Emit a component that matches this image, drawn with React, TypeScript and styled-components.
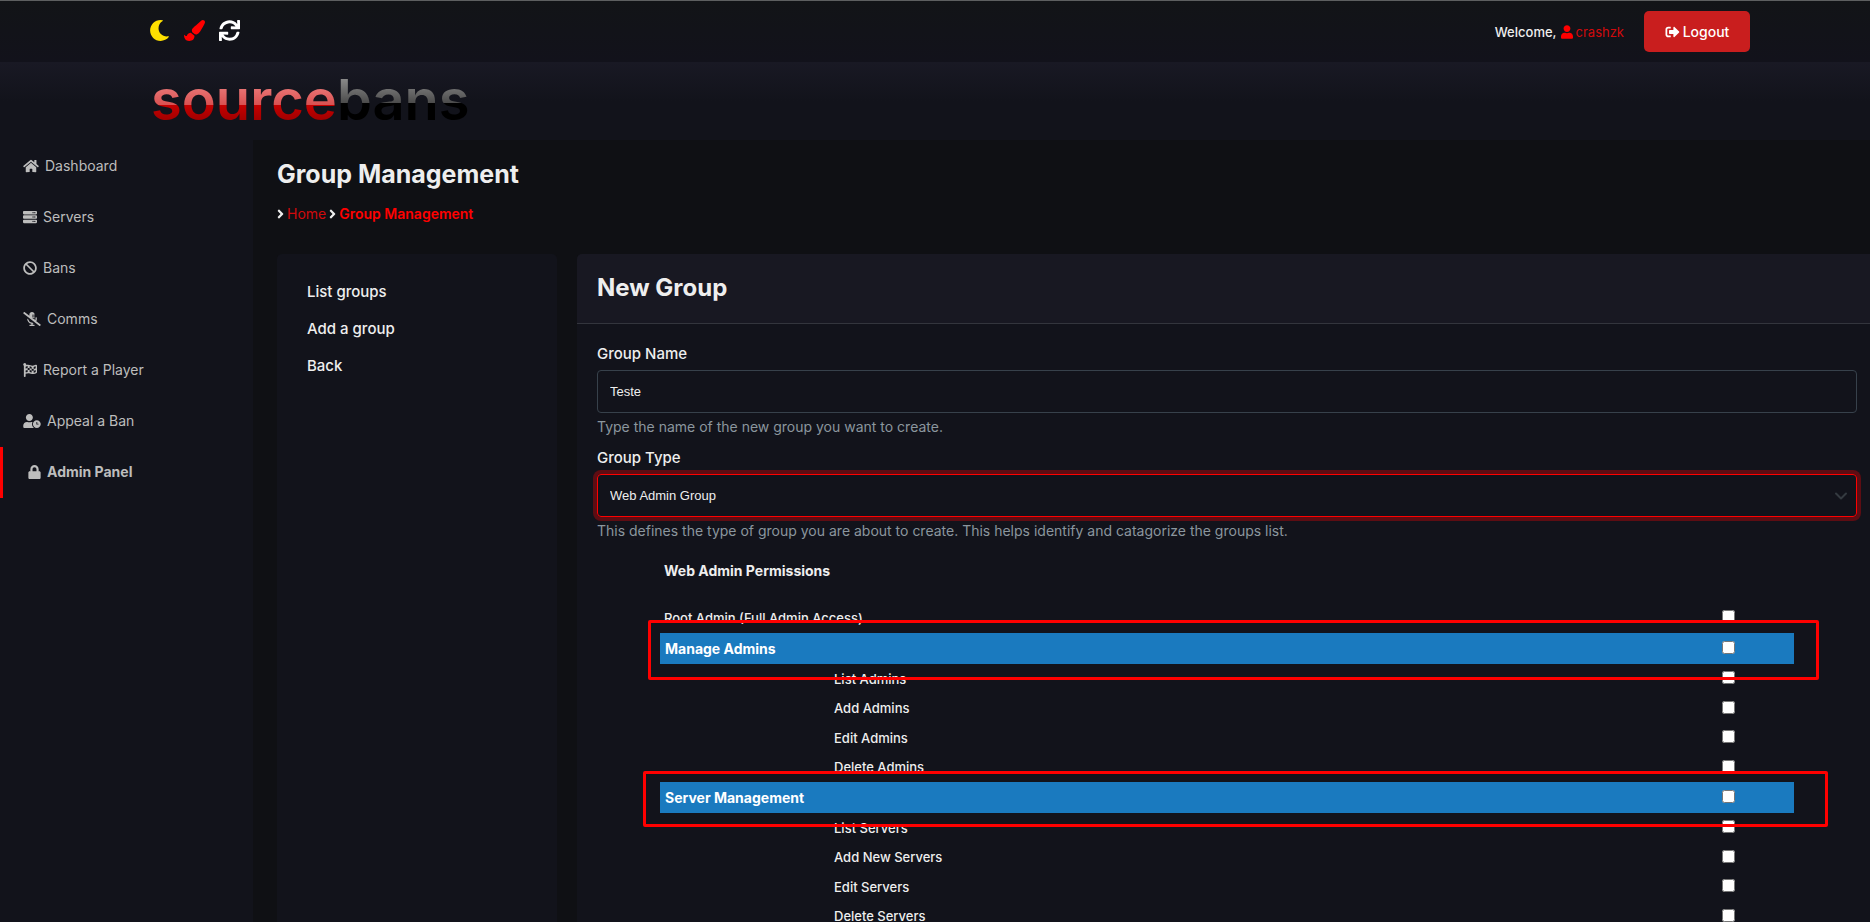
import React, { useState } from "react";
import styled, { createGlobalStyle } from "styled-components";
import {
  FaMoon, FaPaintBrush, FaSync, FaUser, FaSignOutAlt, FaHome, FaServer, FaBan,
  FaMicrophoneAltSlash, FaFlagCheckered, FaUserClock, FaLock, FaAngleRight,
} from "react-icons/fa";

const GlobalStyle = createGlobalStyle`
  *, *::before, *::after { box-sizing: border-box; }
  body {
    margin: 0;
    background: #0f1014;
    color: #eee;
    font: 500 13px/20px Inter, "Liberation Sans", sans-serif;
  }
  a { color: inherit; text-decoration: none; }
  svg { display: block; flex: none; }
`;

const Shell = styled.div`
  display: flex;
  flex-direction: column;
  height: 100vh;
  overflow: hidden;
`;

/* Glyphs share one height while each keeps its own width. */
const Glyph = styled.span<{ $width: number }>`
  flex: none;
  width: ${(p) => p.$width}px;
  svg { width: 100%; height: 14px; }
`;

const TopBar = styled.div`
  display: flex;
  align-items: center;
  justify-content: space-between;
  flex: none;
  height: 62px;
  padding: 0 120px 0 149px;
  border-top: 1px solid #5d5f60;
  background: linear-gradient(#121417, #12121b);
`;

const Tools = styled.div`
  display: flex;
  gap: 14px;
`;

const ToolButton = styled.button<{ $color: string }>`
  display: flex;
  padding: 0 0 2px;
  border: 0;
  background: none;
  color: ${(p) => p.$color};
  font-size: 21px;
  cursor: pointer;
`;

const Account = styled.div`
  display: flex;
  align-items: center;
  gap: 20px;
`;

const Welcome = styled.div`
  display: flex;
  align-items: center;
  gap: 4px;
`;

const UserLink = styled.a`
  display: flex;
  align-items: center;
  gap: 3px;
  color: #d10a0c;
  font-weight: 400;
  svg { color: #f00; }
`;

const LogoutButton = styled.button`
  display: flex;
  align-items: center;
  justify-content: center;
  gap: 3px;
  width: 106px;
  height: 41px;
  border: 0;
  border-radius: 5px;
  background: #c91e1e;
  color: #fff;
  font: 500 14px/20px Inter, sans-serif;
  cursor: pointer;
`;

const Header = styled.header`
  flex: none;
  height: 78px;
  padding: 6px 0 0 151px;
  background: linear-gradient(#191924, #12131b 50%);
`;

const Logo = styled.a`
  display: inline-block;
  font: 600 56px/64px Inter, sans-serif;
`;

const LogoPart = styled.span<{ $fill: string }>`
  background: ${(p) => p.$fill};
  background-clip: text;
  -webkit-background-clip: text;
  color: transparent;
`;

const Columns = styled.div`
  display: flex;
  flex: 1;
  min-height: 0;
`;

const Sidebar = styled.nav`
  flex: none;
  width: 253px;
  padding-top: 1px;
  background: #12131b;
`;

const NavLink = styled.a<{ $active?: boolean }>`
  display: flex;
  align-items: center;
  gap: 6px;
  height: 51px;
  padding: 0 0 2px ${(p) => (p.$active ? 25 : 23)}px;
  border-left: ${(p) => (p.$active ? "3px solid #f00" : "0")};
  color: #bdbdbd;
  font-size: 14px;
  font-weight: ${(p) => (p.$active ? 700 : 400)};
`;

const Main = styled.main`
  display: flex;
  flex-direction: column;
  flex: 1;
  min-width: 0;
  padding: 17px 0 0 24px;
`;

const PageTitle = styled.h1`
  margin: 0;
  font-size: 25px;
  line-height: 34px;
  font-weight: 700;
`;

const Breadcrumb = styled.nav`
  display: flex;
  align-items: center;
  gap: 3px;
  margin: 13px 0 30px;
  font-size: 14px;
`;

const Crumb = styled.a<{ $current?: boolean }>`
  color: ${(p) => (p.$current ? "#f00" : "#d10a0c")};
  font-weight: ${(p) => (p.$current ? 600 : 400)};
`;

const Panels = styled.div`
  display: flex;
  flex: 1;
  gap: 20px;
  min-height: 0;
`;

const SideMenu = styled.nav`
  display: flex;
  flex-direction: column;
  flex: none;
  gap: 17px;
  width: 280px;
  padding: 28px 30px;
  border-radius: 5px 5px 0 0;
  background: #12131b;
  font-size: 15px;
`;

const Card = styled.section`
  flex: 1;
  min-width: 0;
  border-radius: 5px 0 0 0;
  background: #12131b;
`;

const CardHead = styled.div`
  height: 70px;
  padding: 17px 20px;
  border-bottom: 1px solid #33353d;
  border-radius: 5px 0 0 0;
  background: #181822;
`;

const CardTitle = styled.h2`
  margin: 0;
  font-size: 24px;
  line-height: 34px;
  font-weight: 700;
`;

const Form = styled.form`
  padding: 20px 13px 0 20px;
`;

const Field = styled.div`
  display: flex;
  flex-direction: column;
  height: 104px;
`;

const FieldLabel = styled.label`
  margin-bottom: 6px;
  font-size: 15px;
`;

const controlStyle = `
  width: 100%;
  height: 43px;
  padding: 0 12px;
  border: 1px solid #37414b;
  border-radius: 4px;
  outline: 0;
  background: transparent;
  color: #eee;
  font: 400 13px/20px "Liberation Sans", Arial, sans-serif;
`;

const TextInput = styled.input`${controlStyle}`;

const SelectWrap = styled.div`
  position: relative;
`;

const Select = styled.select`
  ${controlStyle}
  display: block;
  appearance: none;
  border-color: #f00;
  box-shadow: 0 0 0 4px #5d0d13;
  option { background: #12131b; }
`;

const SelectArrow = styled.svg`
  position: absolute;
  top: 18px;
  right: 10px;
  pointer-events: none;
`;

const Help = styled.small`
  margin-top: 4px;
  color: #8b969e;
  font-size: 14px;
  font-weight: 400;
`;

const Permissions = styled.div`
  width: 90%;
  margin: 0 auto;
  padding-top: 9px;
`;

const PermissionsTitle = styled.h3`
  margin: 0 4px 21px;
  font-size: 14px;
  line-height: 20px;
  font-weight: 700;
`;

const Row = styled.div<{ $kind?: "band" | "child" }>`
  display: flex;
  align-items: center;
  justify-content: space-between;
  height: ${(p) => (p.$kind === "child" ? "auto" : "31px")};
  padding: 0 59px 0 ${(p) => (p.$kind === "child" ? 174 : p.$kind === "band" ? 5 : 4)}px;
  background: ${(p) => (p.$kind === "band" ? "#1a7abf" : "none")};
  color: ${(p) => (p.$kind === "band" ? "#fff" : "#eee")};
  font-size: ${(p) => (p.$kind === "band" ? 14 : 13)}px;
  font-weight: ${(p) => (p.$kind === "band" ? 700 : 500)};
`;

const Check = styled.input`
  width: 13px;
  height: 13px;
  margin: 0 0 2px;
`;

const Group = styled.div`
  position: relative;
`;

const Children = styled.div`
  display: grid;
  grid-template-rows: repeat(4, 1fr);
  height: 118px;
`;

const Highlight = styled.div<{ $top: number; $left: number; $right: number; $height: number }>`
  position: absolute;
  top: -${(p) => p.$top}px;
  left: -${(p) => p.$left}px;
  right: -${(p) => p.$right}px;
  height: ${(p) => p.$height}px;
  border: 3px solid #f00;
  border-radius: 2px;
  pointer-events: none;
`;

const nav = [
  { label: "Dashboard", Icon: FaHome, width: 16 },
  { label: "Servers", Icon: FaServer, width: 14 },
  { label: "Bans", Icon: FaBan, width: 14 },
  { label: "Comms", Icon: FaMicrophoneAltSlash, width: 18 },
  { label: "Report a Player", Icon: FaFlagCheckered, width: 14 },
  { label: "Appeal a Ban", Icon: FaUserClock, width: 18 },
  { label: "Admin Panel", Icon: FaLock, width: 13, active: true },
];

const groups = [
  {
    label: "Manage Admins",
    items: ["List Admins", "Add Admins", "Edit Admins", "Delete Admins"],
    mark: { $top: 13, $left: 12, $right: 25, $height: 60 },
  },
  {
    label: "Server Management",
    items: ["List Servers", "Add New Servers", "Edit Servers", "Delete Servers"],
    mark: { $top: 11, $left: 17, $right: 34, $height: 56 },
  },
];

function Permission({ label, kind }: { label: string; kind?: "band" | "child" }) {
  const id = label.toLowerCase().replace(/[^a-z]+/g, "-");
  return (
    <Row $kind={kind}>
      <label htmlFor={id}>{label}</label>
      <Check type="checkbox" id={id} />
    </Row>
  );
}

export default function App() {
  const [name, setName] = useState("Teste");
  return (
    <>
      <GlobalStyle />
      <Shell>
        <TopBar>
          <Tools>
            <ToolButton $color="#ffe000" aria-label="Dark mode"><FaMoon /></ToolButton>
            <ToolButton $color="#f00" aria-label="Theme colour"><FaPaintBrush /></ToolButton>
            <ToolButton $color="#fff" aria-label="Reset theme"><FaSync /></ToolButton>
          </Tools>
          <Account>
            <Welcome>
              Welcome,
              <UserLink href="#account"><Glyph $width={12}><FaUser /></Glyph>crashzk</UserLink>
            </Welcome>
            <LogoutButton><Glyph $width={15}><FaSignOutAlt /></Glyph>Logout</LogoutButton>
          </Account>
        </TopBar>
        <Header>
          <Logo href="#home">
            <LogoPart $fill="linear-gradient(#ee8585 20%, #d95050 58%, #c40000 58%, #900 85%)">source</LogoPart>
            <LogoPart $fill="linear-gradient(#888 20%, #4c4c4c 54%, #000 54%)">bans</LogoPart>
          </Logo>
        </Header>
        <Columns>
          <Sidebar>
            {nav.map(({ label, Icon, width, active }) => (
              <NavLink key={label} href="#nav" $active={active}>
                <Glyph $width={width}><Icon /></Glyph>{label}
              </NavLink>
            ))}
          </Sidebar>
          <Main>
            <PageTitle>Group Management</PageTitle>
            <Breadcrumb>
              <Glyph $width={7}><FaAngleRight /></Glyph>
              <Crumb href="#home">Home</Crumb>
              <Glyph $width={7}><FaAngleRight /></Glyph>
              <Crumb href="#groups" $current>Group Management</Crumb>
            </Breadcrumb>
            <Panels>
              <SideMenu>
                <a href="#list">List groups</a>
                <a href="#add">Add a group</a>
                <a href="#back">Back</a>
              </SideMenu>
              <Card>
                <CardHead><CardTitle>New Group</CardTitle></CardHead>
                <Form>
                  <Field>
                    <FieldLabel htmlFor="group-name">Group Name</FieldLabel>
                    <TextInput id="group-name" value={name} onChange={(e) => setName(e.target.value)} />
                    <Help>Type the name of the new group you want to create.</Help>
                  </Field>
                  <Field>
                    <FieldLabel htmlFor="group-type">Group Type</FieldLabel>
                    <SelectWrap>
                      <Select id="group-type">
                        <option>Web Admin Group</option>
                      </Select>
                      <SelectArrow width="12" height="8" viewBox="0 0 12 8" fill="none" stroke="#343a40" strokeWidth="2" strokeLinecap="round" strokeLinejoin="round">
                        <path d="M1 1.5l5 5 5-5" />
                      </SelectArrow>
                    </SelectWrap>
                    <Help>This defines the type of group you are about to create. This helps identify and catagorize the groups list.</Help>
                  </Field>
                  <Permissions>
                    <PermissionsTitle>Web Admin Permissions</PermissionsTitle>
                    <Permission label="Root Admin (Full Admin Access)" />
                    {groups.map((group) => (
                      <Group key={group.label}>
                        <Permission label={group.label} kind="band" />
                        <Children>
                          {group.items.map((item) => (
                            <Permission key={item} label={item} kind="child" />
                          ))}
                        </Children>
                        <Highlight {...group.mark} />
                      </Group>
                    ))}
                  </Permissions>
                </Form>
              </Card>
            </Panels>
          </Main>
        </Columns>
      </Shell>
    </>
  );
}
